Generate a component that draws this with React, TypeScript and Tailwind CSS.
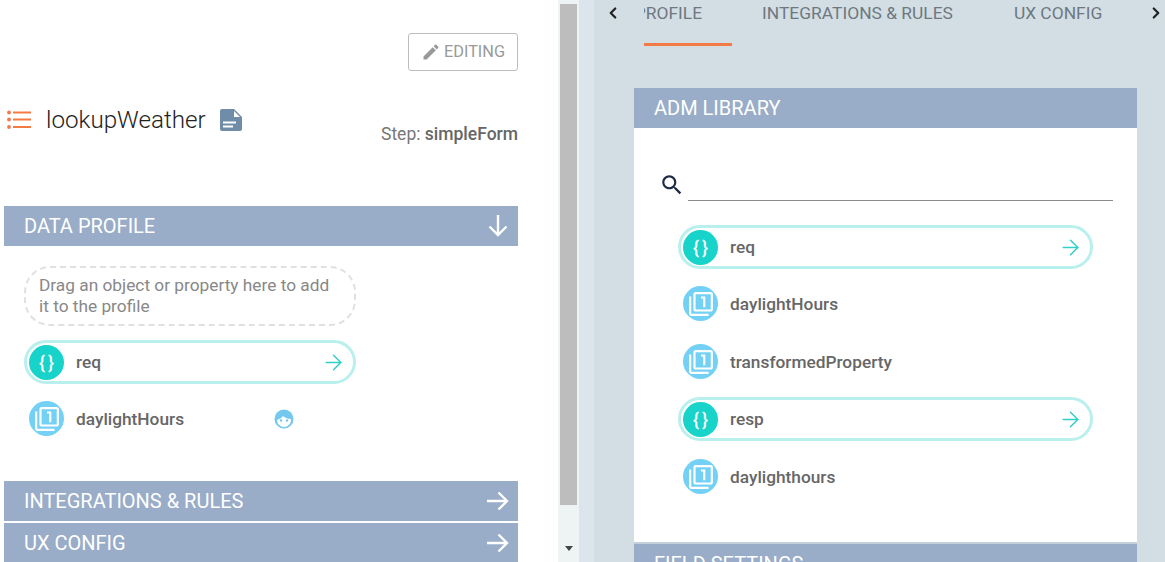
import { ArrowRight, ChevronLeft, ChevronRight } from "lucide-react"

const sans = "font-['Roboto','Liberation_Sans',sans-serif]"

function BracesIcon() {
  return (
    <div className="w-[35px] h-[35px] rounded-full bg-[#17d3c9] flex items-center justify-center gap-[3px] text-white text-[18px] font-medium shrink-0">
      <span>{"{"}</span>
      <span>{"}"}</span>
    </div>
  )
}

function PropIcon() {
  return (
    <div className="w-[35px] h-[35px] rounded-full bg-[#74d1f6] flex items-center justify-center shrink-0">
      <svg viewBox="0 0 24 24" className="w-[26px] h-[26px] fill-white">
        <path d="M3 5H1v16c0 1.1.9 2 2 2h16v-2H3V5zm11 10h2V5h-4v2h2v8zm7-14H7c-1.1 0-2 .9-2 2v14c0 1.1.9 2 2 2h14c1.1 0 2-.9 2-2V3c0-1.1-.9-2-2-2zm0 16H7V3h14v14z" />
      </svg>
    </div>
  )
}

function ObjectPill({ name, width }: { name: string; width: string }) {
  return (
    <div className={`${width} h-[44px] rounded-full border-[3px] border-[#b9f0ee] bg-white flex items-center pl-[2px] pr-[7px]`}>
      <BracesIcon />
      <span className="ml-[12px] pt-[2px] text-[17.3px] font-medium text-[#666666] flex-1">{name}</span>
      <ArrowRight className="w-[25px] h-[25px] text-[#2fd0c8]" strokeWidth={1.4} />
    </div>
  )
}

function PropRow({ name, className = "" }: { name: string; className?: string }) {
  return (
    <div className={`flex items-center ${className}`}>
      <PropIcon />
      <span className="ml-[12px] pt-[2px] text-[17.3px] font-medium text-[#666666]">{name}</span>
    </div>
  )
}

function HeaderArrow({ down = false }: { down?: boolean }) {
  return (
    <svg viewBox="0 0 22 20" className={`w-[22px] h-[20px] stroke-white fill-none ${down ? "rotate-90" : ""}`} strokeWidth="2.4">
      <path d="M0 10h20M11.5 1.5 20 10l-8.5 8.5" />
    </svg>
  )
}

function SectionHeader({ title, icon, className = "" }: { title: string; icon?: "right" | "down"; className?: string }) {
  return (
    <div className={`h-[40px] bg-[#99acc8] flex items-center justify-between pl-[20px] pr-[9px] text-white text-[20px] shrink-0 ${className}`}>
      <span>{title}</span>
      {icon === "right" && <HeaderArrow />}
      {icon === "down" && <HeaderArrow down />}
    </div>
  )
}

export default function App() {
  return (
    <div className={`w-[1165px] h-[562px] overflow-hidden flex bg-white ${sans}`}>
      {/* Left panel */}
      <div className="w-[558px] shrink-0 pl-[4px] pr-[40px] flex flex-col">
        <div className="flex justify-end pt-[33px] shrink-0">
          <div className="w-[110px] h-[38px] border border-[#bdbdbd] rounded-[3px] flex items-center justify-center gap-[3px] text-[#999999] text-[16.3px]">
            <svg viewBox="0 0 24 24" className="w-[20px] h-[20px] fill-[#999999]">
              <path d="M3 17.25V21h3.75L17.81 9.94l-3.75-3.75L3 17.25zM20.71 7.04c.39-.39.39-1.02 0-1.41l-2.34-2.34c-.39-.39-1.02-.39-1.41 0l-1.83 1.83 3.75 3.75 1.83-1.83z" />
            </svg>
            EDITING
          </div>
        </div>

        <div className="flex items-start justify-between mt-[34px] h-[101px] shrink-0">
          <div className="flex items-center h-[30px] pl-[3px]">
            <svg viewBox="0 0 24 20" className="w-[24px] h-[20px] fill-[#f47a45]">
              <circle cx="2" cy="2.5" r="1.9" />
              <circle cx="2" cy="9.5" r="1.9" />
              <circle cx="2" cy="17" r="1.9" />
              <path d="M6 1.5h18v2H6zM6 8.5h18v2H6zM6 16h18v2H6z" />
            </svg>
            <span className="ml-[15px] text-[24.2px] leading-[30px] font-light text-[#222222]">lookupWeather</span>
            <svg viewBox="0 0 22 22" className="ml-[14px] w-[22px] h-[22px]">
              <path d="M2 0h12l8 8v12a2 2 0 0 1-2 2H2a2 2 0 0 1-2-2V2a2 2 0 0 1 2-2z" fill="#6f8ca8" />
              <path d="M14 2 20 8h-6z" fill="#ffffff" />
              <path d="M3 12.5h13v2H3zM3 16.5h10v2H3z" fill="#ffffff" />
            </svg>
          </div>
          <div className="mt-[16px] text-[17.5px] text-[#777777]">
            Step: <span className="font-medium text-[#666666]">simpleForm</span>
          </div>
        </div>

        <SectionHeader title="DATA PROFILE" icon="down" />

        <div className="pl-[20px] pt-[20px] flex flex-col h-[235px] shrink-0">
          <div className="w-[332px] h-[60px] rounded-[26px] border-2 border-dashed border-[#e0e0e0] px-[13px] flex items-center text-[17.3px] leading-[21px] text-[#888888]">
            Drag an object or property here to add it to the profile
          </div>
          <div className="mt-[14px]">
            <ObjectPill name="req" width="w-[332px]" />
          </div>
          <div className="mt-[17px] flex items-center pl-[5px]">
            <PropRow name="daylightHours" />
            <svg viewBox="0 0 20 20" className="ml-[90px] w-[20px] h-[20px]">
              <circle cx="10" cy="10" r="9.5" fill="#74c8ee" />
              <path d="M3 11c2-1 5-2 6-4 2 2 5 3 8 3v1a7 7 0 0 1-14 0z" fill="#ffffff" />
              <circle cx="7" cy="11.5" r="1.2" fill="#74c8ee" />
              <circle cx="13" cy="11.5" r="1.2" fill="#74c8ee" />
            </svg>
          </div>
        </div>

        <SectionHeader title="INTEGRATIONS & RULES" icon="right" />
        <SectionHeader title="UX CONFIG" icon="right" className="mt-[2px]" />
      </div>

      {/* Scrollbar */}
      <div className="w-[21px] shrink-0 bg-[#eef3f3] px-[2px] pt-[4px] flex flex-col items-stretch">
        <div className="h-[501px] bg-[#bdbdbd]" />
        <div className="mt-[41px] self-center w-0 h-0 border-x-[4px] border-x-transparent border-t-[5px] border-t-[#444444]" />
      </div>

      <div className="w-[15px] shrink-0 bg-[#dde5ec]" />

      {/* Right panel */}
      <div className="flex-1 min-w-0 bg-[#d3dee4] flex flex-col">
        <div className="h-[46px] flex shrink-0">
          <div className="w-[50px] shrink-0 pt-[4px] pl-[10px]">
            <ChevronLeft className="w-[18px] h-[18px] text-[#222222]" strokeWidth={3} />
          </div>
          <div className="w-[486px] overflow-hidden">
            <div className="flex w-max -ml-[86px] text-[17.4px] text-[#6e7880]">
              <div className="h-[46px] px-[30px] border-b-[3px] border-[#f47a45]">DATA PROFILE</div>
              <div className="h-[46px] px-[30px]">INTEGRATIONS &amp; RULES</div>
              <div className="h-[46px] pl-[31px] pr-[30px]">UX CONFIG</div>
            </div>
          </div>
          <div className="flex-1 pt-[4px] pl-[19px]">
            <ChevronRight className="w-[18px] h-[18px] text-[#222222]" strokeWidth={3} />
          </div>
        </div>

        <div className="ml-[40px] w-[503px] mt-[42px] flex flex-col">
          <SectionHeader title="ADM LIBRARY" />
          <div className="h-[414px] bg-white pt-[42px] pl-[44px] pr-[24px] shrink-0">
            <div className="flex items-end -ml-[16px]">
              <svg viewBox="0 0 24 24" className="w-[26px] h-[26px] fill-[#1f2a44] mb-[3px] -ml-[3px]">
                <path d="M15.5 14h-.79l-.28-.27C15.41 12.59 16 11.11 16 9.5 16 5.91 13.09 3 9.5 3S3 5.91 3 9.5 5.91 16 9.5 16c1.61 0 3.09-.59 4.23-1.57l.27.28v.79l5 4.99L20.49 19l-4.99-5zm-6 0C7.01 14 5 11.99 5 9.5S7.01 5 9.5 5 14 7.01 14 9.5 11.99 14 9.5 14z" />
              </svg>
              <div className="ml-[3px] flex-1 h-[31px] border-b border-[#8a8a8a]" />
            </div>
            <div className="mt-[24px] flex flex-col">
              <ObjectPill name="req" width="w-[415px]" />
              <PropRow name="daylightHours" className="ml-[5px] mt-[17px]" />
              <PropRow name="transformedProperty" className="ml-[5px] mt-[23px]" />
              <div className="mt-[18px]">
                <ObjectPill name="resp" width="w-[415px]" />
              </div>
              <PropRow name="daylighthours" className="ml-[5px] mt-[18px]" />
            </div>
          </div>
          <div className="border-t-2 border-[#c3d0dc] shrink-0">
            <SectionHeader title="FIELD SETTINGS" />
          </div>
        </div>
      </div>
    </div>
  )
}
